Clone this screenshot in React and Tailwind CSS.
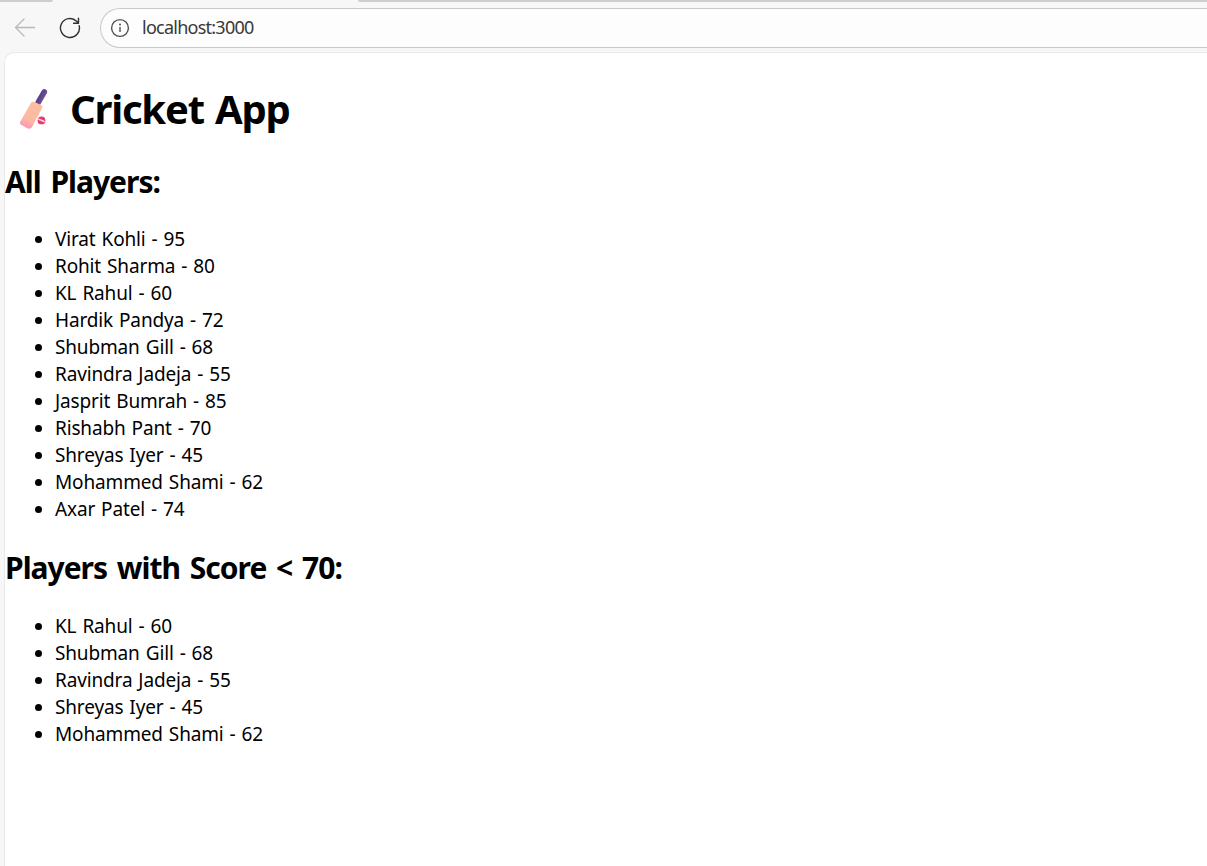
const players = [
  { name: 'Virat Kohli', score: 95 },
  { name: 'Rohit Sharma', score: 80 },
  { name: 'KL Rahul', score: 60 },
  { name: 'Hardik Pandya', score: 72 },
  { name: 'Shubman Gill', score: 68 },
  { name: 'Ravindra Jadeja', score: 55 },
  { name: 'Jasprit Bumrah', score: 85 },
  { name: 'Rishabh Pant', score: 70 },
  { name: 'Shreyas Iyer', score: 45 },
  { name: 'Mohammed Shami', score: 62 },
  { name: 'Axar Patel', score: 74 },
];

function BatIcon() {
  return (
    <svg className="ml-[13px] h-[42px] w-[32px] shrink-0" viewBox="0 0 32 42" fill="none">
      <defs>
        <linearGradient id="blade" x1="18" y1="14" x2="7" y2="41" gradientUnits="userSpaceOnUse">
          <stop stopColor="#fcbf9e" />
          <stop offset="0.65" stopColor="#fcb9a2" />
          <stop offset="1" stopColor="#fb91b8" />
        </linearGradient>
        <linearGradient id="grip" x1="22" y1="6" x2="27" y2="9" gradientUnits="userSpaceOnUse">
          <stop stopColor="#533e8b" />
          <stop offset="1" stopColor="#765097" />
        </linearGradient>
      </defs>
      <path d="M20.2 14.5 26.3 4" stroke="url(#grip)" strokeWidth="5.6" strokeLinecap="round" />
      <path d="M12.8 15.2c.8-1.4 2.2-1.9 3.6-1.2l6.3 2.7c1.4.7 1.9 2.1 1.3 3.6L14.2 38.8c-1 1.8-2.7 2.5-4.5 1.6l-7-3.8c-.9-.5-1.1-1.5-.6-2.5Z" fill="url(#blade)" />
      <circle cx="23.5" cy="32.4" r="3.9" fill="#e5396f" />
      <path d="m20.3 31 6.4 2.7" stroke="#ffd3dc" strokeWidth="1.6" />
    </svg>
  );
}

function BrowserBar() {
  return (
    <header className="flex h-[52px] flex-col bg-[#f7f7f7]">
      <div className="flex h-[3px] justify-between">
        <div className="h-[2px] w-[53px] rounded-br-[3px] bg-[#cdcdcd]" />
        <div className="h-[2px] w-[849px] rounded-bl-[3px] bg-[#cdcdcd]" />
      </div>
      <div className="mt-[5px] flex h-[40px] items-center">
        <svg className="ml-[14px] h-5 w-[22px]" viewBox="0 0 22 20" fill="none" stroke="#b9b9b9" strokeWidth="1.3" strokeLinecap="round" strokeLinejoin="round">
          <path d="M20.5 9.5H1.5M10 1 1.5 9.5 10 18" />
        </svg>
        <svg className="ml-[23px] h-[22px] w-[22px]" viewBox="0 0 22 22" fill="none" stroke="#303030" strokeWidth="1.4" strokeLinecap="round" strokeLinejoin="round">
          <path d="M20.2 8.8A9.5 9.5 0 1 1 17.6 4.2L19.5 6.1M19.5 1.2v5H14.6" />
        </svg>
        <div className="ml-[19px] flex h-[40px] flex-1 items-center rounded-l-full border border-r-0 border-[#c9c9c9] bg-[#fdfdfd]">
          <svg className="ml-[9px] h-5 w-5" viewBox="0 0 20 20" fill="none" stroke="#505050" strokeWidth="1.4">
            <circle cx="10" cy="10" r="8.4" />
            <path d="M10 9v5" />
            <circle cx="10" cy="6.5" r="1" fill="#505050" stroke="none" />
          </svg>
          <span className="ml-[12px] pb-[2px] text-[18px] leading-6 tracking-[-0.75px] text-[#383838]">localhost:3000</span>
        </div>
      </div>
    </header>
  );
}

function PlayerList({ items }) {
  return (
    <ul className="list-disc pl-[50px] text-[19px] leading-[27px] tracking-[-0.15px] [word-spacing:1.2px]">
      {items.map((p) => (
        <li key={p.name}>
          {p.name} - {p.score}
        </li>
      ))}
    </ul>
  );
}

export default function App() {
  return (
    <div className="flex h-[866px] w-full flex-col overflow-hidden bg-[#f7f7f7] font-['Noto_Sans','Open_Sans',sans-serif] text-black">
      <BrowserBar />
      <main className="ml-[4px] flex-1 rounded-tl-[10px] border-t border-l border-[#e9e9e9] bg-white">
        <h1 className="mt-[29px] flex h-[53px] items-center text-[40px] leading-[53px] font-bold">
          <BatIcon />
          <span className="ml-[20px] tracking-[-1.2px] [word-spacing:2px]">Cricket App</span>
        </h1>
        <h2 className="mt-[27px] text-[30px] leading-[40px] font-bold tracking-[-1px] [word-spacing:3px]">All Players:</h2>
        <div className="mt-[24px]">
          <PlayerList items={players} />
        </div>
        <h2 className="mt-[25px] text-[30px] leading-[40px] font-bold tracking-[-1px] [word-spacing:3px]">Players with Score &lt; 70:</h2>
        <div className="mt-[25px]">
          <PlayerList items={players.filter((p) => p.score < 70)} />
        </div>
      </main>
    </div>
  );
}
